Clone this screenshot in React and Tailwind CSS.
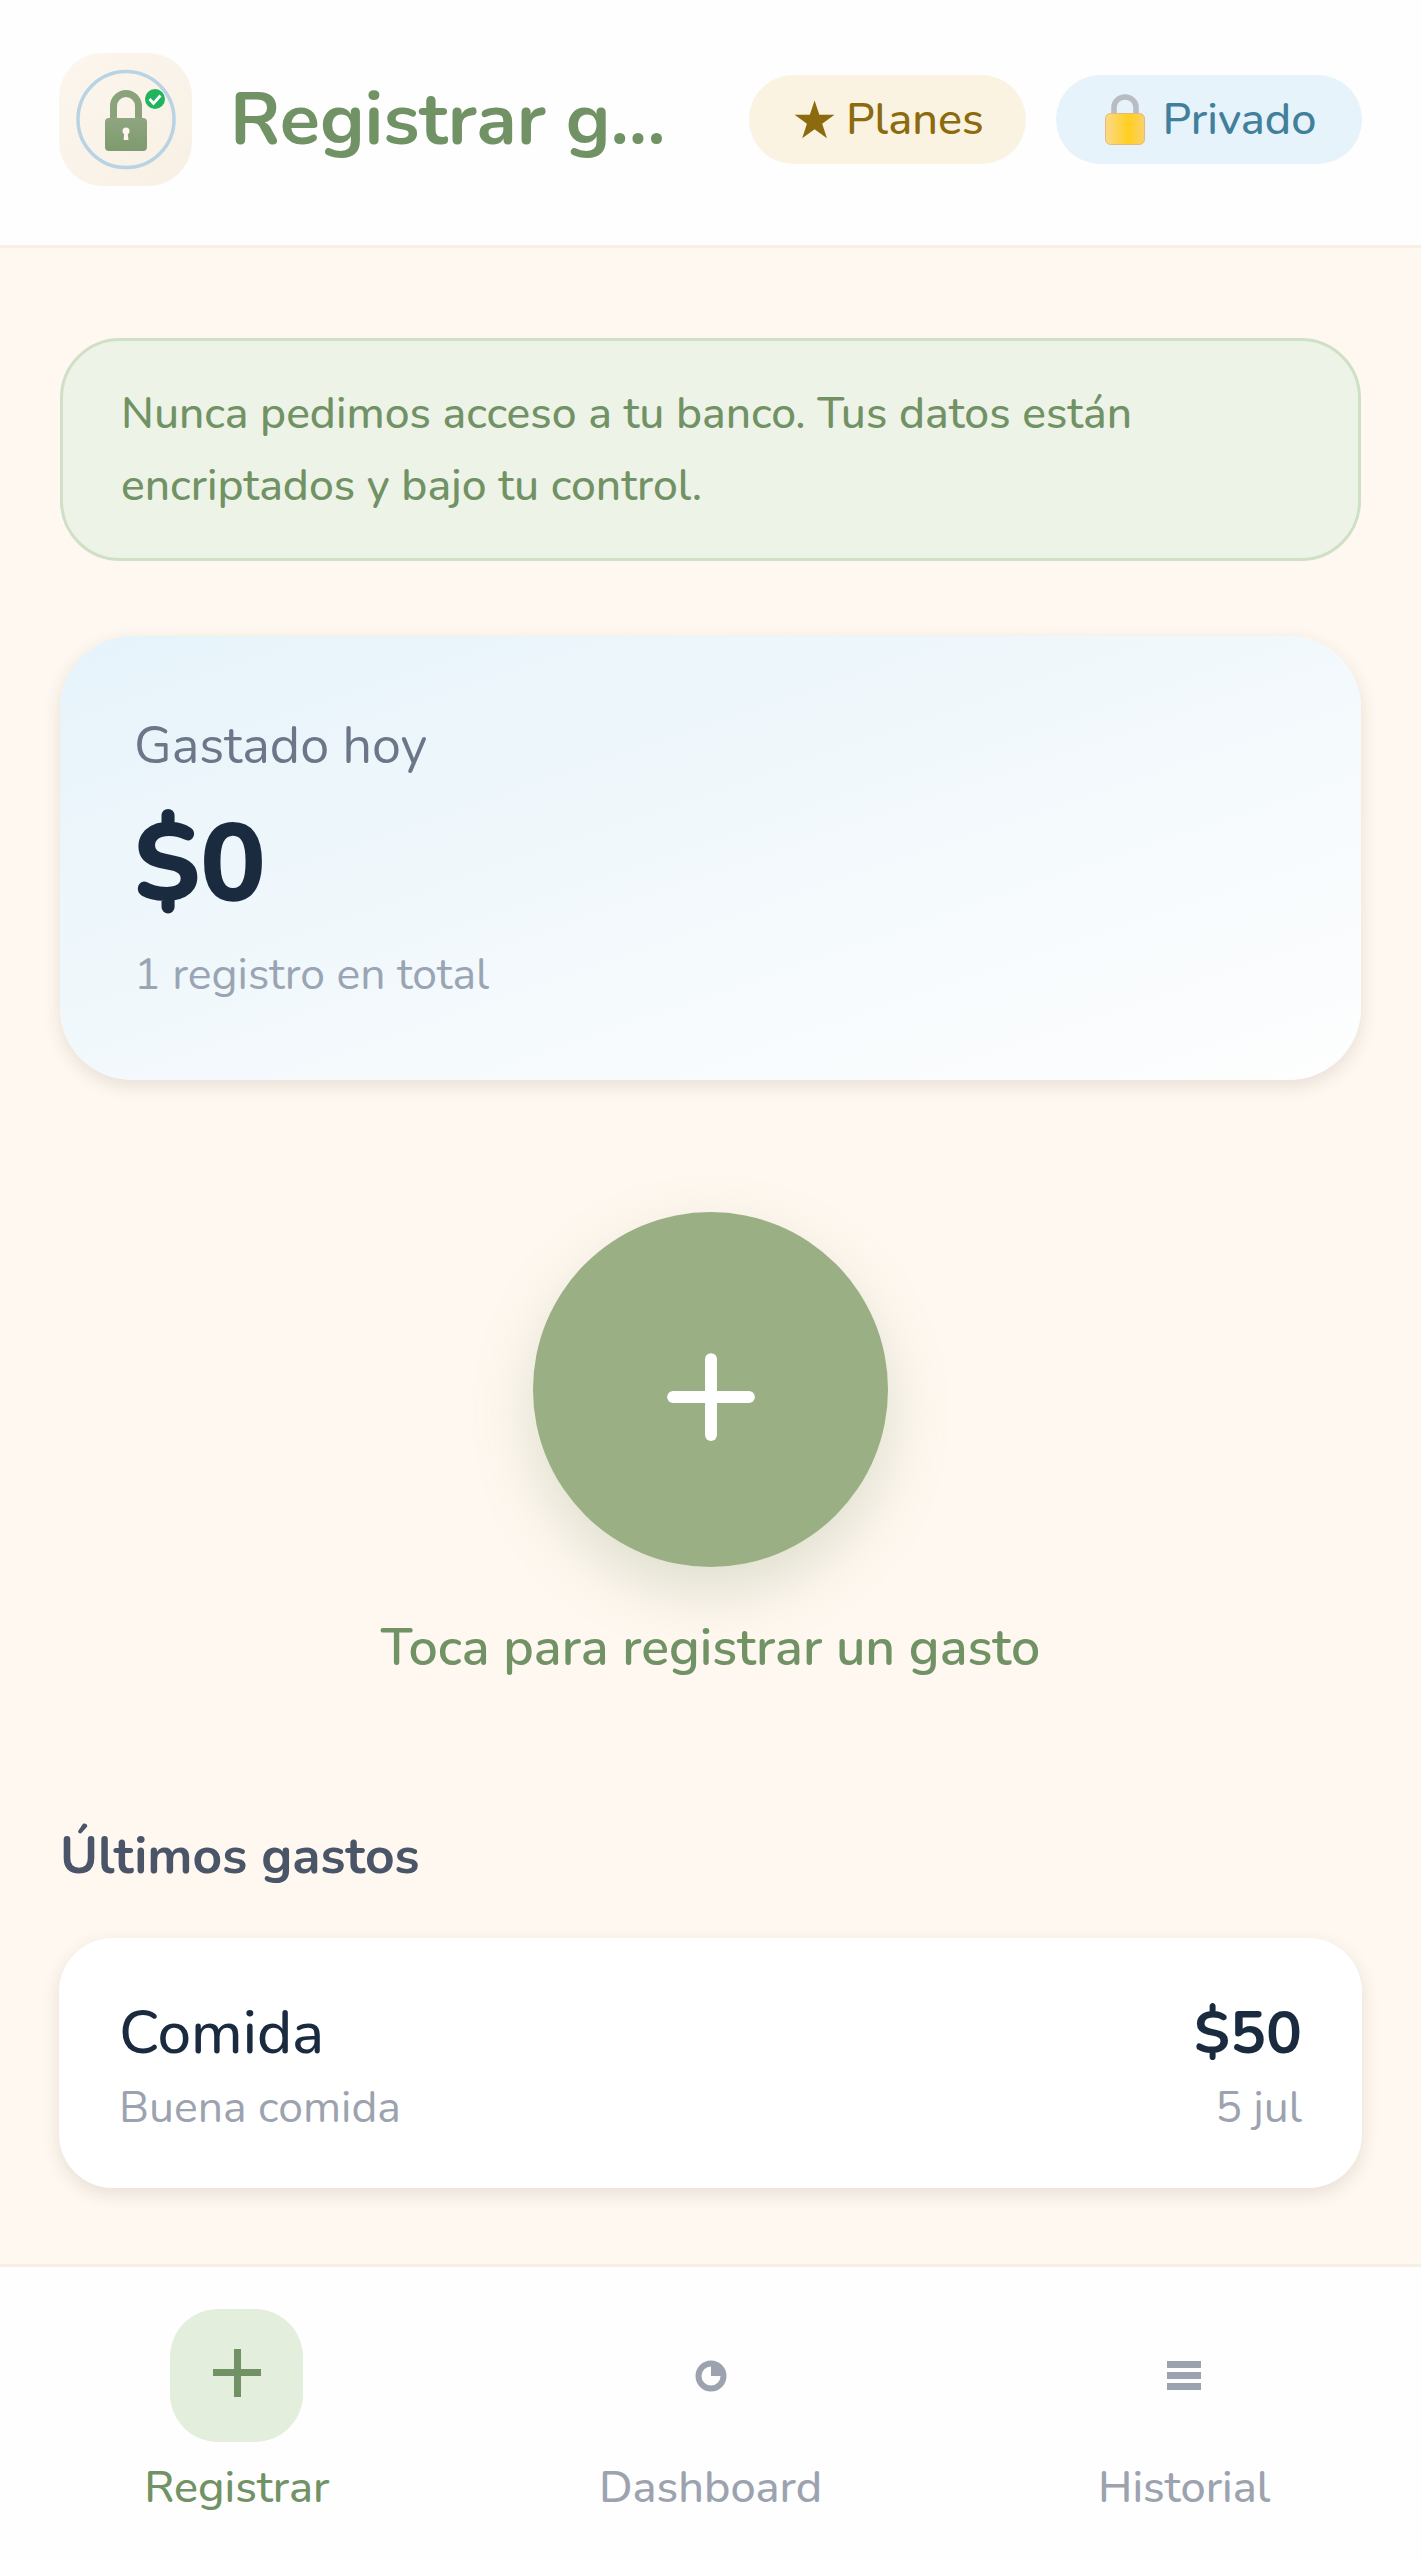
import { Plus } from 'lucide-react';

const AppLogo = () => (
  <div className="w-[133px] h-[133px] shrink-0 rounded-[44px] bg-gradient-to-br from-[#fcf6ee] to-[#f8f0e4]">
    <svg viewBox="0 0 133 133" className="w-full h-full">
      <defs>
        <linearGradient id="lockBody" x1="0" y1="0" x2="0" y2="1">
          <stop offset="0" stopColor="#8fa680" />
          <stop offset="1" stopColor="#7e9a6e" />
        </linearGradient>
      </defs>
      <circle cx="67" cy="66.500" r="48" fill="none" stroke="#b8d3e4" strokeWidth="3.500" />
      <path d="M54.500 68V53a12.500 12.500 0 0 1 25 0v15" fill="none" stroke="#8aa37a" strokeWidth="7" />
      <rect x="46" y="65" width="42" height="33" rx="4" fill="url(#lockBody)" />
      <circle cx="67" cy="78" r="3.500" fill="#fdf6ee" />
      <path d="M65.500 79h3l1 8h-5z" fill="#fdf6ee" />
      <circle cx="96" cy="46" r="10" fill="#22b45c" />
      <path d="M90.500 46l4 4.500 7-8" fill="none" stroke="#fff" strokeWidth="2.800" />
    </svg>
  </div>
);

const PadlockEmoji = () => (
  <svg viewBox="0 0 40 51" className="w-[40px] h-[51px] shrink-0">
    <defs>
      <linearGradient id="padBody" x1="0" y1="0" x2="1" y2="0">
        <stop offset="0" stopColor="#fcd98a" />
        <stop offset="0.6" stopColor="#ffcf1e" />
        <stop offset="1" stopColor="#fbd06e" />
      </linearGradient>
    </defs>
    <path d="M9 21V13a11 10 0 0 1 22 0v8" fill="none" stroke="#b9bcc2" strokeWidth="5.500" />
    <rect x="0.500" y="19.500" width="39" height="31" rx="5" fill="url(#padBody)" stroke="#e3b97c" strokeWidth="1" />
  </svg>
);

const PieIcon = () => (
  <svg viewBox="0 0 32 32" className="w-[32px] h-[32px]">
    <circle cx="16" cy="16" r="12.500" fill="none" stroke="#9ca3af" strokeWidth="6" />
    <path d="M16 4a12 12 0 0 1 12 12H16z" fill="#9ca3af" />
  </svg>
);

const ListIcon = () => (
  <div className="flex flex-col gap-[4px] w-[34px]">
    <div className="h-[7px] bg-[#9ca3af]" />
    <div className="h-[7px] bg-[#9ca3af]" />
    <div className="h-[7px] bg-[#9ca3af]" />
  </div>
);

const NavItem = ({ icon, label, active }) => (
  <div className="flex-1 flex flex-col items-center">
    <div className={`w-[133px] h-[133px] rounded-[48px] flex items-center justify-center ${active ? 'bg-[#e4eedd]' : ''}`}>
      {icon}
    </div>
    <span className={`mt-[12px] text-[45px] leading-[68px] font-medium ${active ? 'text-[#719264]' : 'text-[#9ca3af]'}`}>
      {label}
    </span>
  </div>
);

export default function App() {
  return (
    <div className="h-[2560px] flex flex-col bg-[#fff8f0] font-['Nunito','Lato',sans-serif]">
      <header className="h-[248px] shrink-0 flex items-center pl-[59px] pr-[59px] pb-[6px] bg-[#fefefe] border-b-[3px] border-[#f8efe5]">
        <AppLogo />
        <h1 className="ml-[38px] w-[450px] truncate text-[74px] font-bold text-[#719264]">Registrar g...</h1>
        <div className="flex-1 flex items-center justify-end gap-[30px]">
          <div className="shrink-0 h-[89px] w-[277px] rounded-full bg-[#fbf3e2] flex items-center justify-center gap-[8px] text-[45px] font-medium text-[#8b6b0e]">
            <span className="font-['DejaVu_Sans'] text-[52px] leading-none">★</span>
            <span>Planes</span>
          </div>
          <div className="shrink-0 h-[89px] w-[306px] rounded-full bg-[#e6f3fa] flex items-center justify-center gap-[18px] pl-[3px] text-[45px] font-medium text-[#417f9a]">
            <PadlockEmoji />
            <span>Privado</span>
          </div>
        </div>
      </header>

      <main className="flex-1 px-[60px] pt-[90px]">
        <div className="h-[223px] rounded-[60px] border-[3px] border-[#cfe0c6] bg-[#eef3e7] px-[58px] flex items-center text-[44.400px] leading-[72px] font-medium text-[#719264]">
          <p className="w-[1100px]">Nunca pedimos acceso a tu banco. Tus datos están encriptados y bajo tu control.</p>
        </div>

        <div className="mt-[75px] h-[444px] rounded-[72px] bg-gradient-to-br from-[#e6f3fa] to-[#fefefe] px-[74px] pt-[72px] shadow-[0_6px_18px_rgba(60,50,30,0.12)]">
          <p className="text-[52px] leading-[76px] text-[#6b7788]">Gastado hoy</p>
          <p className="mt-[14px] text-[110px] leading-[132px] font-extrabold text-[#1a2b3f]">$0</p>
          <p className="mt-[12px] text-[44.500px] leading-[66px] text-[#9aa5b4]">1 registro en total</p>
        </div>

        <div className="mt-[132px] flex flex-col items-center">
          <div className="w-[355px] h-[355px] rounded-full bg-[#9aaf84] flex items-center justify-center shadow-[0_24px_60px_rgba(122,148,104,0.25)]">
            <Plus size={130} strokeWidth={2.2} className="text-white mt-[14px]" />
          </div>
          <p className="mt-[46px] text-[51.800px] leading-[70px] font-semibold text-[#719264]">Toca para registrar un gasto</p>
        </div>

        <h2 className="mt-[137px] text-[51.500px] leading-[72px] font-bold text-[#4a5568]">Últimos gastos</h2>

        <div className="mt-[46px] -mx-[1px] h-[250px] rounded-[54px] bg-white pt-[6px] px-[60px] flex items-center justify-between shadow-[0_6px_18px_rgba(60,50,30,0.12)]">
          <div>
            <p className="text-[60px] leading-[84px] font-medium text-[#1a2b3f]">Comida</p>
            <p className="text-[44.500px] leading-[66px] text-[#9ca3af]">Buena comida</p>
          </div>
          <div className="text-right">
            <p className="text-[60px] leading-[84px] font-bold text-[#1a2b3f]">$50</p>
            <p className="text-[44.500px] leading-[66px] text-[#9ca3af]">5 jul</p>
          </div>
        </div>
      </main>

      <nav className="h-[296px] shrink-0 flex pt-[42px] bg-[#fefefe] border-t-[3px] border-[#f6efe6]">
        <NavItem active label="Registrar" icon={<span className="relative w-[48px] h-[48px] -mt-[6px] block"><span className="absolute left-[21px] top-0 w-[7px] h-[48px] bg-[#719264]" /><span className="absolute left-0 top-[20px] w-[48px] h-[7px] bg-[#719264]" /></span>} />
        <NavItem label="Dashboard" icon={<PieIcon />} />
        <NavItem label="Historial" icon={<ListIcon />} />
      </nav>
    </div>
  );
}
